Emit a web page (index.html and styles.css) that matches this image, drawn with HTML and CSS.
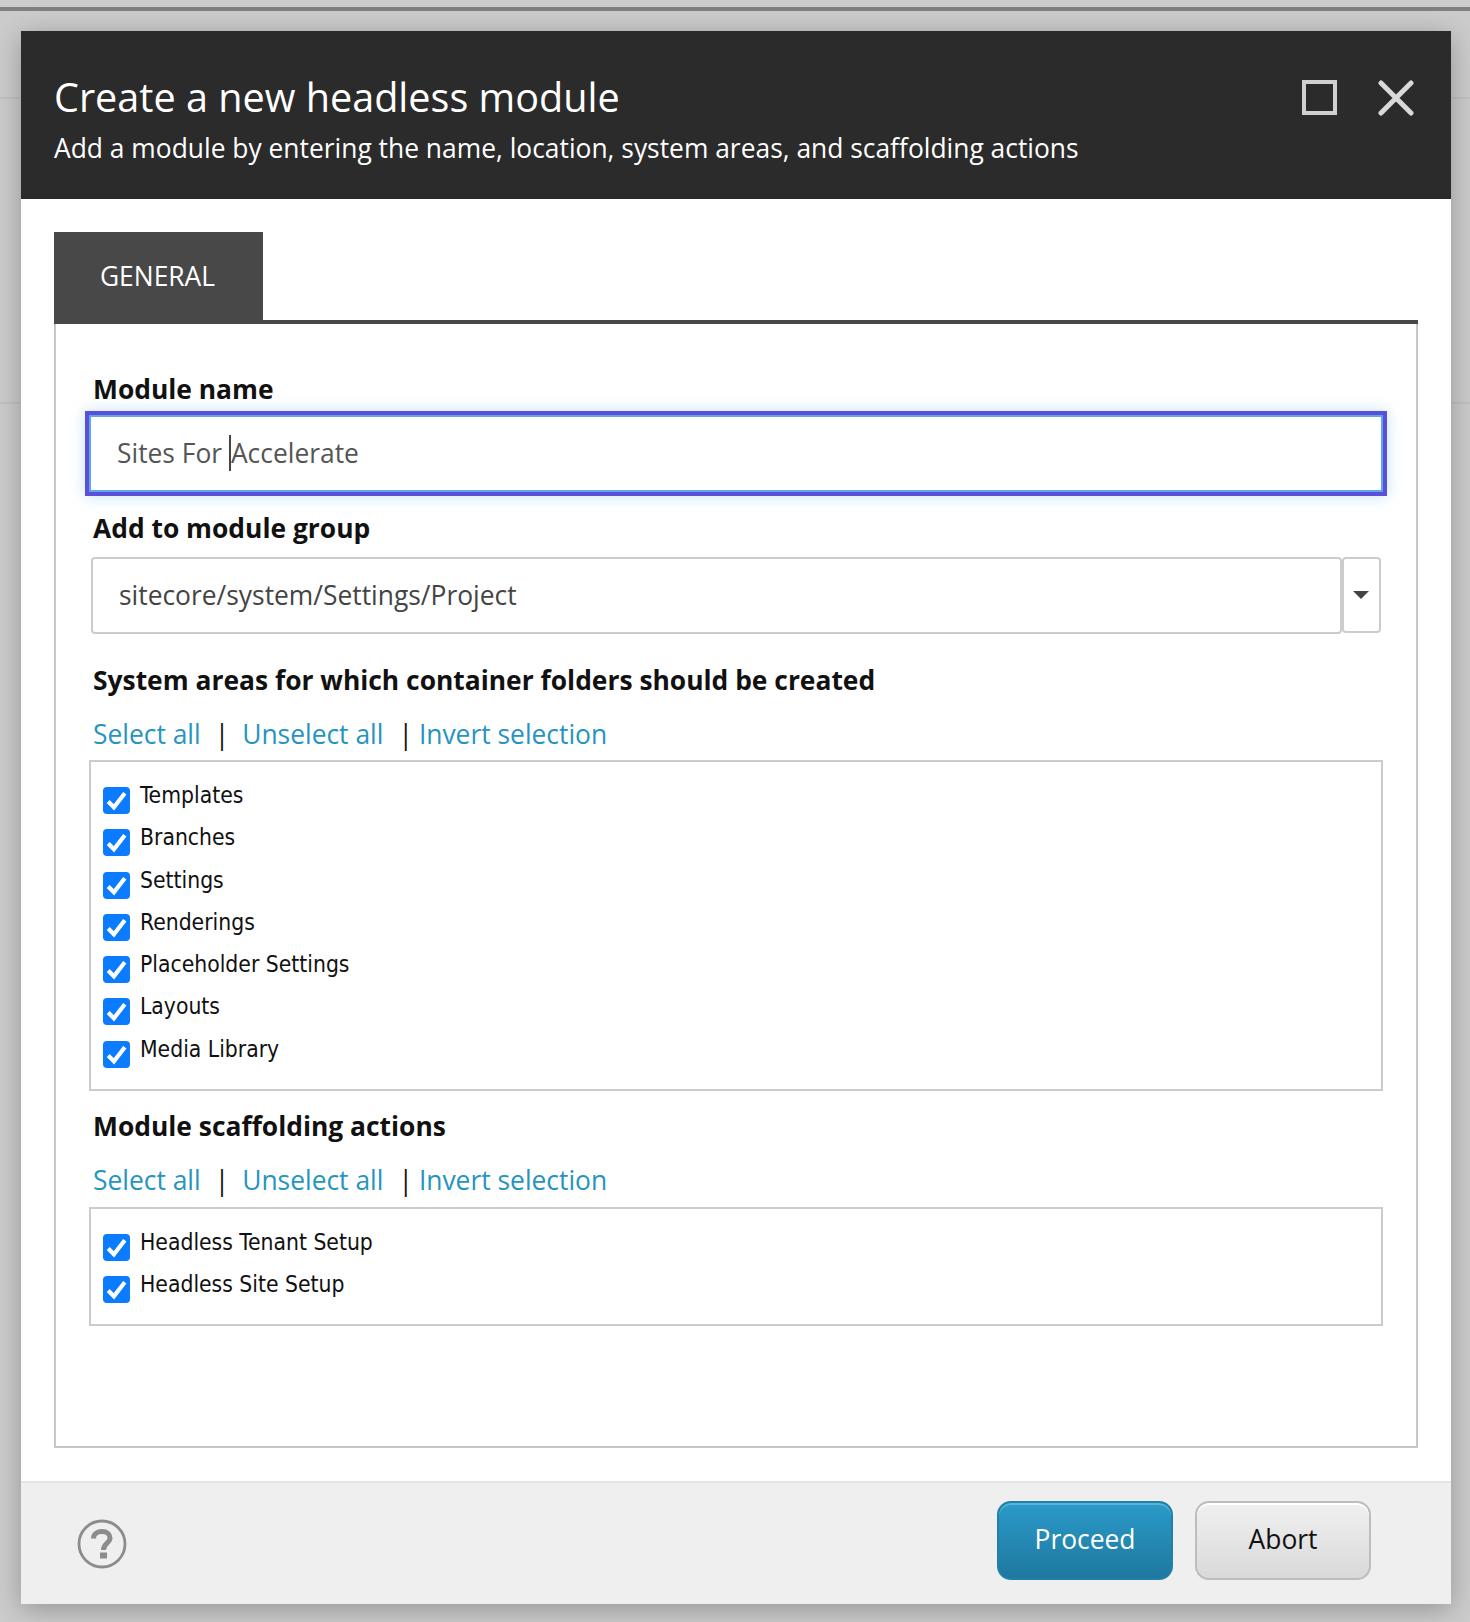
FILE: index.html
```html
<!DOCTYPE html>
<html lang="en">
<head>
	<meta charset="UTF-8">
	<title>Create a new headless module</title>
	<link rel="stylesheet" href="styles.css">
</head>
<body>
	<div class="topbar"></div>
	<div class="dialog">
		<div class="dialog-header">
			<div class="heading">
				<h1>Create a new headless module</h1>
				<p>Add a module by entering the name, location, system areas, and scaffolding actions</p>
			</div>
			<div class="window-btns">
				<span class="maximize"></span>
				<svg class="close" width="36" height="36" viewBox="0 0 36 36"><path d="M3 3L33 33M33 3L3 33" stroke="#d9d9d9" stroke-width="5" stroke-linecap="round"/></svg>
			</div>
		</div>
		<div class="dialog-body">
			<div class="tabs"><a class="tab">GENERAL</a></div>
			<div class="panel">
				<label class="lbl lbl-first">Module name</label>
				<div class="name-input">
					<span>Sites For&nbsp;</span><i class="caret"></i><span>Accelerate</span>
				</div>
				<label class="lbl lbl-group">Add to module group</label>
				<div class="combo">
					<div class="combo-text">sitecore/system/Settings/Project</div>
					<div class="combo-btn"><i></i></div>
				</div>
				<label class="lbl lbl-areas">System areas for which container folders should be created</label>
				<div class="links">
					<a>Select all</a><b class="s1">|</b><a>Unselect all</a><b class="s2">|</b><a>Invert selection</a>
				</div>
				<ul class="checks checks-areas">
					<li><span class="cb"><svg viewBox="0 0 26 26"><path d="M5 14L10.5 19.5L21 6" /></svg></span>Templates</li>
					<li><span class="cb"><svg viewBox="0 0 26 26"><path d="M5 14L10.5 19.5L21 6" /></svg></span>Branches</li>
					<li><span class="cb"><svg viewBox="0 0 26 26"><path d="M5 14L10.5 19.5L21 6" /></svg></span>Settings</li>
					<li><span class="cb"><svg viewBox="0 0 26 26"><path d="M5 14L10.5 19.5L21 6" /></svg></span>Renderings</li>
					<li><span class="cb"><svg viewBox="0 0 26 26"><path d="M5 14L10.5 19.5L21 6" /></svg></span>Placeholder Settings</li>
					<li><span class="cb"><svg viewBox="0 0 26 26"><path d="M5 14L10.5 19.5L21 6" /></svg></span>Layouts</li>
					<li><span class="cb"><svg viewBox="0 0 26 26"><path d="M5 14L10.5 19.5L21 6" /></svg></span>Media Library</li>
				</ul>
				<label class="lbl lbl-actions">Module scaffolding actions</label>
				<div class="links">
					<a>Select all</a><b class="s1">|</b><a>Unselect all</a><b class="s2">|</b><a>Invert selection</a>
				</div>
				<ul class="checks checks-actions">
					<li><span class="cb"><svg viewBox="0 0 26 26"><path d="M5 14L10.5 19.5L21 6" /></svg></span>Headless Tenant Setup</li>
					<li><span class="cb"><svg viewBox="0 0 26 26"><path d="M5 14L10.5 19.5L21 6" /></svg></span>Headless Site Setup</li>
				</ul>
			</div>
		</div>
		<div class="dialog-footer">
			<svg class="help" width="50" height="50" viewBox="0 0 50 50">
				<circle cx="25" cy="25" r="23" fill="none" stroke="#8c8c8c" stroke-width="2.8"/>
				<path d="M16.5 19.5C16.5 15 20.5 12.5 25 12.5C30 12.5 33 15.3 33 19C33 24.5 26.5 24 26.5 31" fill="none" stroke="#8c8c8c" stroke-width="5"/>
				<rect x="23" y="33.5" width="7" height="6" fill="#8c8c8c"/>
			</svg>
			<div class="actions">
				<button class="btn btn-primary">Proceed</button>
				<button class="btn">Abort</button>
			</div>
		</div>
	</div>
</body>
</html>
```

FILE: styles.css
```css
* {
	margin: 0;
	padding: 0;
	box-sizing: border-box;
}
html, body {
	height: 1622px;
	overflow: hidden;
}
body {
	background-color: #ccc;
	background-image: linear-gradient(#c2c2c2, #c2c2c2), linear-gradient(#c2c2c2, #c2c2c2);
	background-size: 100% 2px, 100% 2px;
	background-position: 0 97px, 0 402px;
	background-repeat: no-repeat;
	padding-top: 7px;
	font-family: "Open Sans", "Noto Sans", sans-serif;
	color: #111;
}
.topbar {
	height: 4px;
	background-color: #808080;
}
.dialog {
	width: 1430px;
	height: 1573px;
	margin: 20px 0 0 21px;
	background-color: #fff;
	display: flex;
	flex-direction: column;
	box-shadow: 0 5px 26px rgba(0, 0, 0, .28);
}
.dialog-header {
	height: 168px;
	flex: none;
	background-color: #2b2b2b;
	color: #fff;
	padding: 0 37px 0 33px;
	display: flex;
	justify-content: space-between;
}
.heading h1 {
	font-size: 39.6px;
	font-weight: 400;
	line-height: 54px;
	margin-top: 39px;
}
.heading p {
	font-size: 26.4px;
	line-height: 36px;
	margin-top: 6px;
}
.window-btns {
	display: flex;
	gap: 41px;
	padding-top: 49px;
}
.maximize {
	width: 35px;
	height: 35px;
	border: 4px solid #d0d0d0;
}
.close {
	display: block;
}
.dialog-body {
	flex: 1;
	padding: 33px 33px 33px;
	display: flex;
	flex-direction: column;
}
.tabs {
	height: 92px;
	flex: none;
	border-bottom: 4px solid #484848;
}
.tab {
	display: block;
	width: 209px;
	height: 88px;
	padding-right: 2px;
	background-color: #484848;
	color: #fff;
	font-size: 26.4px;
	line-height: 88px;
	text-align: center;
}
.panel {
	flex: 1;
	border: 2px solid #c8c8c8;
	border-top: none;
	padding: 0 33px 0 33px;
	background-color: #fff;
}
.lbl {
	display: block;
	font-size: 26.4px;
	font-weight: 700;
	line-height: 36px;
}
.lbl-first {
	margin: 47px 0 0 4px;
}
.name-input {
	width: 1302px;
	height: 85px;
	margin: 4px 0 0 -4px;
	border: 4px solid #5a4edb;
	outline: 2px solid #5aa9e6;
	outline-offset: -6px;
	box-shadow: 0 0 14px rgba(90, 169, 230, .35);
	padding: 0 0 2px 28px;
	display: flex;
	align-items: center;
	font-size: 26.4px;
	color: #555;
	white-space: pre;
}
.caret {
	width: 2px;
	height: 36px;
	background-color: #444;
}
.lbl-group {
	margin: 14px 0 0 4px;
}
.combo {
	display: flex;
	width: 1290px;
	height: 77px;
	margin: 11px 0 0 2px;
}
.combo-text {
	flex: 1;
	border: 2px solid #ccc;
	border-radius: 4px;
	padding-left: 26px;
	font-size: 26.4px;
	line-height: 72px;
	color: #444;
}
.combo-btn {
	width: 39px;
	height: 76px;
	border: 2px solid #ccc;
	border-radius: 4px;
	display: flex;
	align-items: center;
	justify-content: center;
	padding-right: 2px;
}
.combo-btn i {
	border-top: 8px solid #444;
	border-left: 8px solid transparent;
	border-right: 8px solid transparent;
}
.lbl-areas {
	margin: 28px 0 0 4px;
}
.links {
	margin: 17px 0 0 4px;
	height: 38px;
	line-height: 38px;
	font-size: 26.4px;
	white-space: nowrap;
}
.links a {
	color: #2694c1;
}
.links b {
	font-weight: 400;
	color: #111;
}
.s1 {
	margin: 0 13px 0 14px;
}
.s2 {
	margin: 0 6px 0 15px;
}
.checks {
	list-style-type: none;
	width: 1294px;
	margin-top: 7px;
	border: 2px solid #ccc;
	padding: 14px 0 0 12px;
	font-family: "DejaVu Sans", sans-serif;
	font-stretch: condensed;
	font-size: 22.7px;
	color: #111;
}
.checks li {
	height: 42.3px;
	line-height: 38px;
	display: flex;
}
.checks-areas {
	height: 331px;
}
.checks-actions {
	height: 119px;
	margin-top: 8px;
}
.cb {
	width: 27px;
	height: 27px;
	margin: 11px 10px 0 0;
	background-color: #0b7cff;
	border-radius: 4px;
	flex: none;
}
.cb svg {
	display: block;
	fill: none;
	stroke: #fff;
	stroke-width: 4;
}
.lbl-actions {
	margin: 17px 0 0 4px;
}
.dialog-footer {
	height: 123px;
	flex: none;
	background-color: #efefef;
	border-top: 2px solid #e4e4e4;
	display: flex;
	justify-content: space-between;
	padding: 18px 80px 0 56px;
}
.help {
	display: block;
	margin-top: 18px;
}
.actions {
	display: flex;
	gap: 22px;
	height: 79px;
}
.btn {
	width: 176px;
	height: 79px;
	padding-bottom: 3px;
	border: 2px solid #bdbdbd;
	border-radius: 14px;
	background: linear-gradient(#f0f0f0, #d9d9d9);
	box-shadow: inset 0 2px 0 #fff;
	font-family: "Open Sans", sans-serif;
	font-size: 26.4px;
	color: #111;
}
.btn-primary {
	border-color: #1f81aa;
	background: linear-gradient(#2a9ac9, #1f789f);
	box-shadow: inset 0 2px 0 #5ab3d8;
	color: #fff;
}
```
